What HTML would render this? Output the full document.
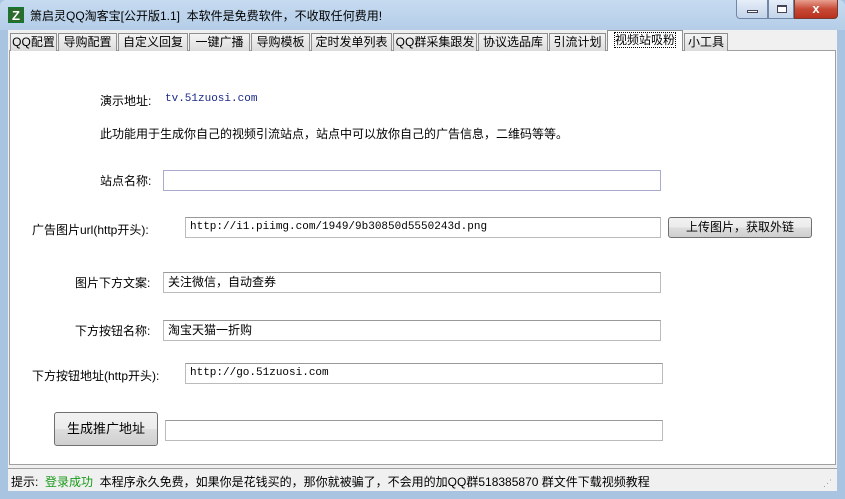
<!DOCTYPE html><html><head><meta charset="utf-8"><style>
*{box-sizing:border-box;margin:0;padding:0}
body{width:845px;height:499px;overflow:hidden;background:#a9c4e0;font-family:"Liberation Sans","Noto Sans CJK SC","WenQuanYi Zen Hei",sans-serif;font-size:12px;color:#000;position:relative}
.a{position:absolute}
.title{left:0;top:0;width:845px;height:30px;background:linear-gradient(#c6dbf0,#b5cde8);border-radius:6px 6px 0 0}
.body{left:8px;top:30px;width:829px;height:461px;background:#f0f0f0}
.panel{left:9px;top:50px;width:827px;height:415px;background:#fff;border:1px solid #a0a0a0}
.tab{top:33px;height:18px;border:1px solid #8e8f8f;border-bottom:none;background:linear-gradient(#f4f4f4,#dcdcdc);font-size:12px;line-height:16px;text-align:center}
.inp{background:#fff;border:1px solid #bbb;border-top-color:#999;height:21px;line-height:19px;padding-left:4px;font-family:"Liberation Mono","Noto Sans CJK SC",monospace;font-size:11px}
.btn{border:1px solid #707070;border-radius:3px;background:linear-gradient(#f2f2f2,#ebebeb 50%,#dddddd 51%,#cfcfcf);text-align:center}
.lbl{font-size:12px}
</style></head><body>
<div class="a title"></div>
<div class="a" style="left:8px;top:7px;width:16px;height:16px;background:#2c6b2c;color:#fff;font-weight:bold;font-size:13px;line-height:16px;text-align:center;border:1px solid #173">Z</div>
<div class="a" style="left:30px;top:7px;font-size:12px">箫启灵QQ淘客宝[公开版1.1]&nbsp; 本软件是免费软件，不收取任何费用!</div>
<div class="a" style="left:736px;top:0;width:32px;height:19px;border:1px solid #6f87a8;border-top:none;border-radius:0 0 0 4px;background:linear-gradient(#e6eef8,#c3d4ea)"><div class="a" style="left:10px;top:10px;width:11px;height:3px;background:#fff;border:1px solid #445"></div></div>
<div class="a" style="left:768px;top:0;width:26px;height:19px;border:1px solid #6f87a8;border-top:none;background:linear-gradient(#e6eef8,#c3d4ea)"><div class="a" style="left:8px;top:5px;width:10px;height:8px;border:1px solid #445;border-top-width:2px;background:#fff"></div></div>
<div class="a" style="left:794px;top:0;width:44px;height:19px;border:1px solid #7a3a30;border-top:none;border-radius:0 0 4px 0;background:linear-gradient(#e8a090,#c74a36 50%,#b8321e);color:#fff;font-weight:bold;text-align:center;line-height:17px;font-size:13px">x</div>
<div class="a body"></div>
<div class="a panel"></div>
<div class="a tab" style="left:10px;width:47px">QQ配置</div>
<div class="a tab" style="left:58px;width:59px">导购配置</div>
<div class="a tab" style="left:118px;width:70px">自定义回复</div>
<div class="a tab" style="left:189px;width:61px">一键广播</div>
<div class="a tab" style="left:251px;width:59px">导购模板</div>
<div class="a tab" style="left:311px;width:81px">定时发单列表</div>
<div class="a tab" style="left:393px;width:84px">QQ群采集跟发</div>
<div class="a tab" style="left:478px;width:70px">协议选品库</div>
<div class="a tab" style="left:549px;width:57px">引流计划</div>
<div class="a tab" style="left:607px;top:30px;width:76px;height:21px;background:#fff;line-height:19px"><span style="outline:1px dotted #000">视频站吸粉</span></div>
<div class="a tab" style="left:684px;width:44px">小工具</div>

<div class="a lbl" style="left:100px;top:92px">演示地址:</div>
<div class="a" style="left:165px;top:93px;color:#1b2a8a;font-family:'Liberation Mono',monospace;font-size:11px">tv.51zuosi.com</div>
<div class="a lbl" style="left:100px;top:125px">此功能用于生成你自己的视频引流站点，站点中可以放你自己的广告信息，二维码等等。</div>
<div class="a lbl" style="left:100px;top:172px">站点名称:</div>
<div class="a inp" style="left:163px;top:170px;width:498px;height:21px;border-color:#aac"></div>
<div class="a lbl" style="left:32px;top:221px">广告图片url(http开头):</div>
<div class="a inp" style="left:185px;top:217px;width:476px">http://i1.piimg.com/1949/9b30850d5550243d.png</div>
<div class="a btn" style="left:668px;top:217px;width:144px;height:21px;line-height:19px">上传图片，获取外链</div>
<div class="a lbl" style="left:75px;top:274px">图片下方文案:</div>
<div class="a inp" style="left:163px;top:272px;width:498px;font-family:'Liberation Sans','Noto Sans CJK SC',sans-serif;font-size:12px">关注微信，自动查券</div>
<div class="a lbl" style="left:75px;top:322px">下方按钮名称:</div>
<div class="a inp" style="left:163px;top:320px;width:498px;font-family:'Liberation Sans','Noto Sans CJK SC',sans-serif;font-size:12px">淘宝天猫一折购</div>
<div class="a lbl" style="left:32px;top:367px">下方按钮地址(http开头):</div>
<div class="a inp" style="left:185px;top:363px;width:478px">http://go.51zuosi.com</div>
<div class="a btn" style="left:54px;top:412px;width:104px;height:34px;line-height:32px;font-size:13px">生成推广地址</div>
<div class="a inp" style="left:165px;top:420px;width:498px"></div>
<div class="a" style="left:8px;top:468px;width:829px;height:1px;background:#a0a0a0"></div>
<div class="a" style="left:11px;top:473px;font-size:12px">提示: <span style="color:#1a9a1a">&nbsp;登录成功</span>&nbsp; 本程序永久免费，如果你是花钱买的，那你就被骗了，不会用的加QQ群518385870 群文件下载视频教程</div>
<div class="a" style="left:823px;top:478px;color:#999;font-size:9px">⋰</div>
</body></html>
